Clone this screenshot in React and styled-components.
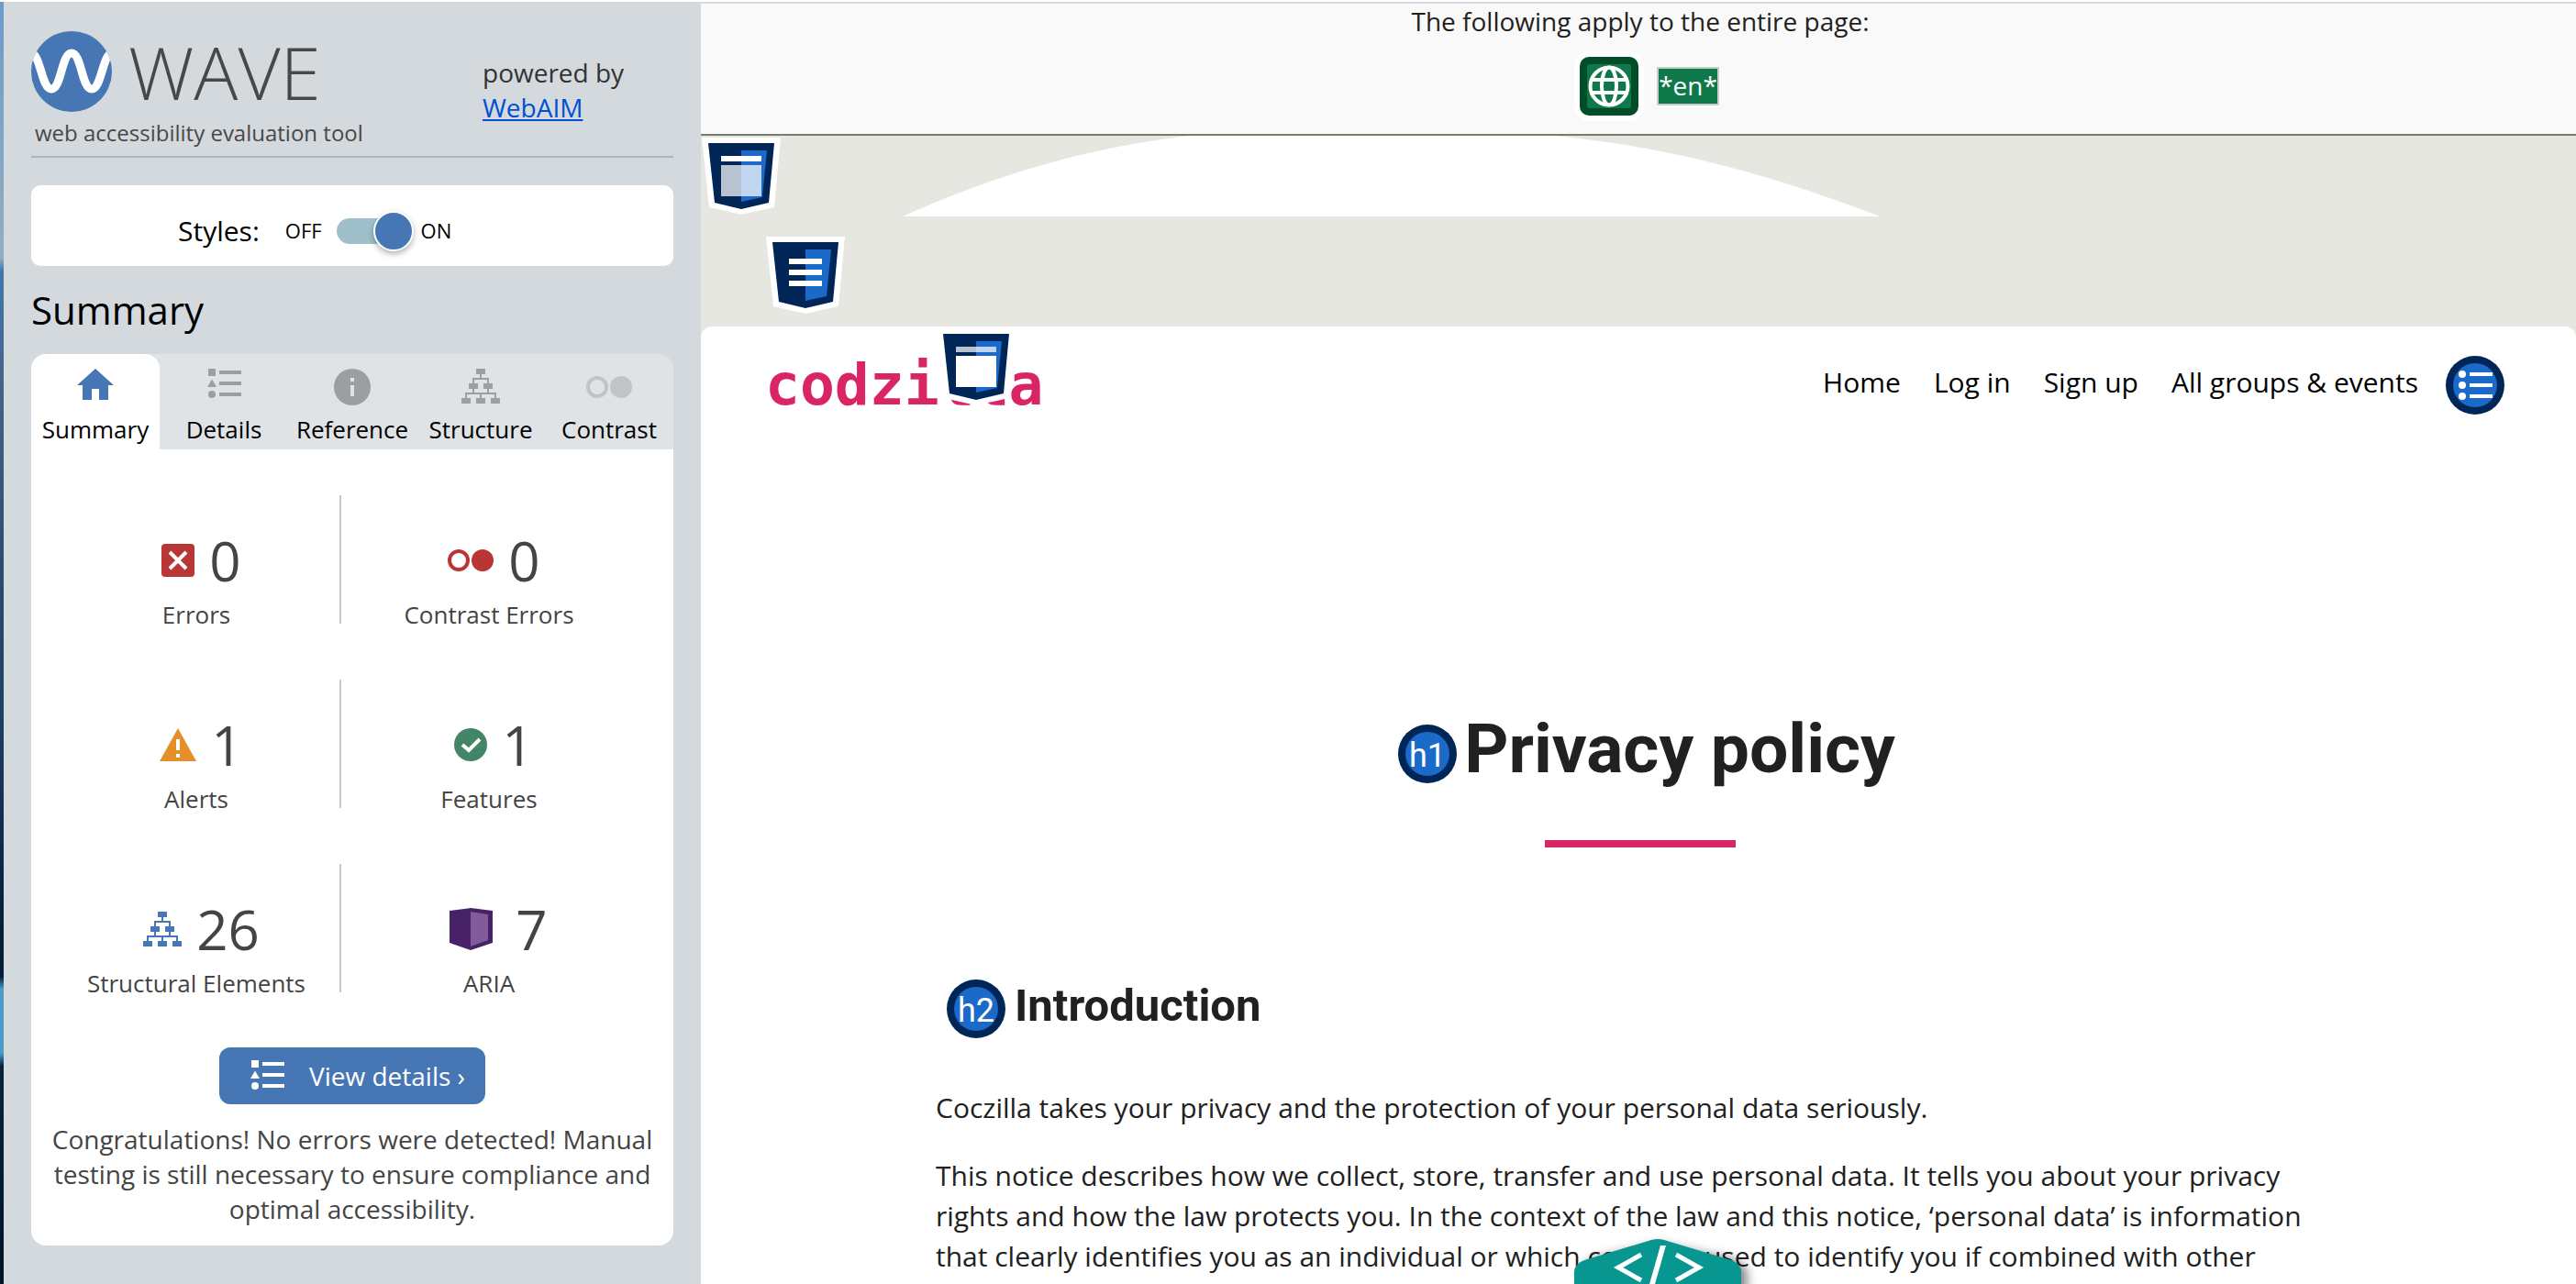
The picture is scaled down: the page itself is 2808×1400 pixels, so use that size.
import React, { useState } from "react";
import styled, { createGlobalStyle } from "styled-components";

const GlobalStyle = createGlobalStyle`
  *, *::before, *::after { box-sizing: border-box; }
  body {
    margin: 0;
    background: #fff;
    font-family: "Open Sans", "Noto Sans", sans-serif;
    font-size: 28px;
    color: #212121;
  }
  h1, h2, p, ul { margin: 0; padding: 0; font-weight: 400; }
  button, input { font-family: inherit; margin: 0; }
  svg { display: block; flex: none; }
`;

/* ---------- frame ---------- */

const Frame = styled.div`
  display: flex;
  height: 100vh;
  overflow: hidden;
  padding-top: 2px;
`;

const DesktopEdge = styled.div`
  flex: 0 0 4px;
  background: linear-gradient(
    #6c9cc8 0%, #93adc0 20%, #3e79ad 21%, #47668f 28%, #2b4a72 45%,
    #1f4068 55%, #06233f 70%, #001c36 76%, #4b9dc8 77%, #4b9dc8 82%,
    #0a2238 83%, #001526 100%
  );
`;

/* ---------- sidebar ---------- */

const Sidebar = styled.aside`
  flex: 0 0 760px;
  padding: 32px 30px 0;
  background: #d4d9dd;
`;

const SidebarHeader = styled.header`
  display: grid;
  grid-template-columns: 492px 1fr;
  padding-bottom: 8px;
  border-bottom: 2px solid #b0b6bb;
`;

const Brand = styled.div`
  display: flex;
  align-items: center;
  gap: 18px;
  font-size: 80px;
  font-weight: 300;
  line-height: 88px;
  color: #484848;
`;

const Tagline = styled.p`
  margin-top: 6px;
  padding-left: 4px;
  font-size: 24px;
  line-height: 34px;
  color: #484848;
`;

const PoweredBy = styled.p`
  padding-top: 26px;
  line-height: 38px;
  color: #333;
  a { display: block; width: fit-content; color: #0050d0; }
`;

const StylesCard = styled.div`
  display: flex;
  align-items: center;
  height: 88px;
  margin-top: 30px;
  padding: 10px 0 0 160px;
  border-radius: 10px;
  background: #fff;
  color: #000;
`;

const StylesLabel = styled.label`
  margin-right: 28px;
  font-size: 30px;
`;

const StateText = styled.span`
  font-size: 22px;
`;

const Switch = styled.input`
  appearance: none;
  display: flex;
  align-items: center;
  justify-content: ${(p) => (p.checked ? "flex-end" : "flex-start")};
  width: 84px;
  height: 28px;
  margin: 2px 8px 0 16px;
  border-radius: 14px;
  background: #9fc0cb;
  &::before {
    content: "";
    flex: none;
    width: 44px;
    height: 44px;
    border: 2px solid #fff;
    border-radius: 50%;
    background: #4676b3;
    box-shadow: 0 3px 6px rgba(0, 0, 0, 0.3);
  }
`;

const SectionTitle = styled.h2`
  margin: 20px 0;
  font-size: 42px;
  line-height: 56px;
  color: #000;
`;

const TabList = styled.div`
  display: grid;
  grid-template-columns: repeat(5, 1fr);
  border-radius: 16px 16px 0 0;
  background: #dfe3e6;
`;

const Tab = styled.button`
  display: flex;
  flex-direction: column;
  align-items: center;
  gap: 8px;
  height: 104px;
  padding: 16px 0 0;
  border: 0;
  border-radius: ${(p) => (p.$active ? "16px 16px 0 0" : "0")};
  background: ${(p) => (p.$active ? "#fff" : "transparent")};
  font-size: 26px;
  line-height: 36px;
  color: #000;
  svg { color: ${(p) => (p.$active ? "#4676b3" : "#9b9fa2")}; }
`;

const SummaryPanel = styled.div`
  padding: 50px 20px 21px;
  border-radius: 0 0 16px 16px;
  background: #fff;
  text-align: center;
  color: #444;
`;

const Counts = styled.div`
  display: grid;
  grid-template-columns: repeat(2, 314px);
  gap: 61px 4px;
  padding-left: 4px;
`;

const Count = styled.div`
  display: flex;
  flex-direction: column;
  justify-content: flex-end;
  gap: 19px;
  height: 140px;
  &:nth-child(odd) { border-right: 2px solid #c8c8c8; }
`;

const CountValue = styled.div`
  display: flex;
  align-items: center;
  justify-content: center;
  gap: 16px;
  padding-left: 11px;
  font-size: 60px;
  line-height: 60px;
`;

const CountName = styled.div`
  font-size: 26px;
  line-height: 20px;
`;

const DetailsButton = styled.button`
  display: flex;
  align-items: center;
  gap: 27px;
  height: 62px;
  margin: 60px auto 19px;
  padding: 0 22px 0 34px;
  border: 0;
  border-radius: 12px;
  background: #4676b3;
  font-size: 28px;
  line-height: 36px;
  color: #fff;
`;

const Message = styled.p`
  line-height: 38px;
`;

/* ---------- evaluated page ---------- */

const Page = styled.div`
  position: relative;
  flex: 1;
  display: flex;
  flex-direction: column;
  min-width: 0;
  border-top: 2px solid #d6dbe1;
  background: #e6e7e0;
`;

const PageNotice = styled.div`
  flex: none;
  padding: 0 0 14px 4px;
  border-bottom: 2px solid #717f6b;
  background: #f9f9f9;
  text-align: center;
  line-height: 38px;
  font-size: 28px;
`;

const NoticeIcons = styled.div`
  display: flex;
  align-items: center;
  justify-content: center;
  gap: 14px;
  margin-top: 14px;
  padding-left: 14px;
`;

const LangTag = styled.span`
  height: 42px;
  border: 2px solid #ccc;
  background: #0f784b;
  line-height: 36px;
  color: #fff;
`;

const Banner = styled.div`
  flex: none;
  height: 208px;
  padding-left: 220px;
`;

const BadgeSpot = styled.div`
  position: absolute;
  left: ${(p) => p.$left}px;
  top: ${(p) => p.$top}px;
`;

const Content = styled.div`
  flex: 1;
  border-radius: 12px 12px 0 0;
  background: #fff;
`;

const NavBar = styled.header`
  display: flex;
  align-items: center;
  justify-content: space-between;
  height: 128px;
  padding: 0 78px 0 70px;
`;

const Wordmark = styled.a`
  font-family: "DejaVu Sans Mono", monospace;
  font-size: 63px;
  font-weight: 700;
  line-height: 74px;
  color: #d92566;
  text-decoration: none;
`;

const Nav = styled.nav`
  display: flex;
  align-items: center;
  gap: 30px;
`;

const NavLinks = styled.ul`
  display: flex;
  gap: 36px;
  padding-bottom: 8px;
  list-style: none;
  font-size: 30px;
  a { color: #000; text-decoration: none; }
`;

const Article = styled.main`
  padding: 288px 252px 0 256px;
  font-size: 30px;
  line-height: 44px;
  p { margin-bottom: 30px; }
`;

const PageTitle = styled.h1`
  display: flex;
  align-items: center;
  justify-content: center;
  gap: 8px;
  padding-left: 14px;
  font: 700 75px/88px Roboto, sans-serif;
  svg { margin-top: 12px; }
`;

const Rule = styled.div`
  width: 208px;
  height: 8px;
  margin: 56px auto 144px;
  background: #d92566;
`;

const Heading = styled.h2`
  display: flex;
  gap: 10px;
  margin-bottom: 54px;
  padding-left: 12px;
  font: 700 49px/58px Roboto, sans-serif;
`;

const DevWidget = styled.button`
  position: absolute;
  bottom: 0;
  left: calc(50% - 82px);
  padding: 0;
  border: 0;
  background: none;
`;

/* ---------- drawings ---------- */

const WaveLogo = () => (
  <svg width="88" height="88" viewBox="0 0 88 88">
    <defs>
      <clipPath id="disc"><circle cx="44" cy="44" r="44" /></clipPath>
    </defs>
    <circle cx="44" cy="44" r="44" fill="#4676b3" />
    <path
      clipPath="url(#disc)"
      d="M-1 24C10 22 11 63 22 63S33 24 44 24S55 63 66 63S78 22 89 24"
      fill="none" stroke="#fff" strokeWidth="9"
    />
  </svg>
);

const HomeIcon = () => (
  <svg width="48" height="40" fill="currentColor">
    <path d="M24 0L44 18H38V34H28V22H20V34H10V18H4Z" />
  </svg>
);

const ListIcon = ({ width = 48, height = 40, x = 0 }) => (
  <svg width={width} height={height} viewBox={`${x} 0 ${width} ${height}`} fill="currentColor">
    <path d="M7 0h8v8H7zM19 2h24v4H19zM19 14h24v4H19zM19 26h24v4H19zM11 11.5L16 20H6z" />
    <circle cx="11" cy="28" r="4" />
  </svg>
);

const InfoIcon = () => (
  <svg width="48" height="40" fill="currentColor">
    <circle cx="24" cy="20" r="20" />
    <path d="M22 10h4v4h-4zM22 18h4v12h-4z" fill="#dfe3e6" />
  </svg>
);

const TreeIcon = ({ color = "currentColor", height = 40 }) => (
  <svg width="42" height={height} fill={color}>
    <path d="M16 0h10v6H16zM8 16h10v6H8zM24 16h10v6H24zM0 32h10v6H0zM16 32h10v6H16zM32 32h10v6H32z" />
    <path d="M21 6V11M13 16V11H29V16M13 22V27M29 22V27M5 32V27H37V32M21 27V32" fill="none" stroke={color} strokeWidth="2" />
  </svg>
);

const ContrastIcon = ({ color = "#c0c4c6" }) => (
  <svg width="50" height="40" fill={color}>
    <circle cx="12" cy="20" r="10" fill="none" stroke={color} strokeWidth="4" />
    <circle cx="38" cy="20" r="12" />
  </svg>
);

const ErrorIcon = () => (
  <svg width="36" height="36">
    <rect width="36" height="36" rx="4" fill="#ba3535" />
    <path d="M9 9L27 27M27 9L9 27" stroke="#fff" strokeWidth="4" />
  </svg>
);

const AlertIcon = () => (
  <svg width="40" height="36">
    <path d="M20 0L40 36H0Z" fill="#e48f27" />
    <path d="M18 12h4v12h-4zM18 28h4v4h-4z" fill="#fff" />
  </svg>
);

const FeatureIcon = () => (
  <svg width="36" height="36">
    <circle cx="18" cy="18" r="18" fill="#438567" />
    <path d="M9 18L16 24L28 12" fill="none" stroke="#fff" strokeWidth="4" />
  </svg>
);

const AriaIcon = () => (
  <svg width="66" height="48" viewBox="-10 0 66 48">
    <path d="M0 4L23 1L47 4V39L23 47L0 39Z" fill="#472266" />
    <path d="M23 5L42 8V36L23 43Z" fill="#805c9c" />
  </svg>
);

const GlobeIcon = () => (
  <svg width="76" height="76">
    <rect width="76" height="76" rx="16" fill="#fff" />
    <rect x="6" y="6" width="64" height="64" rx="10" fill="#004d28" />
    <rect x="14" y="14" width="48" height="48" rx="2" fill="#0f784b" />
    <g fill="none" stroke="#fff" strokeWidth="4">
      <circle cx="38" cy="38" r="20.5" />
      <ellipse cx="38" cy="38" rx="8" ry="20.5" />
      <path d="M18 31H58M18 45H58" />
    </g>
  </svg>
);

const ShieldBadge = ({ children }) => (
  <svg width="86" height="84">
    <path d="M0 0H86L79 76L43 84L8 76Z" fill="#fff" />
    <path d="M7 6H79L73 71L43 78L14 71Z" fill="#002657" />
    <path d="M43 14H71L66 65L43 70Z" fill="#1b6ac9" />
    {children}
  </svg>
);

const RoundBadge = ({ children }) => (
  <svg width="64" height="64">
    <circle cx="32" cy="32" r="32" fill="#002657" />
    <circle cx="32" cy="32" r="24" fill="#1b6ac9" />
    {children}
  </svg>
);

const LevelBadge = ({ level }) => (
  <RoundBadge>
    <text x="32" y="46" textAnchor="middle" fill="#fff" fontFamily="Roboto, sans-serif" fontWeight="400" fontSize="36">
      {level}
    </text>
  </RoundBadge>
);

const Mound = () => (
  <svg width="1065" height="88">
    <path d="M0 88C101 42 206 12 313 0H710C836 12 946 42 1065 88Z" fill="#fff" />
  </svg>
);

const CodeHexagon = () => (
  <svg width="224" height="60">
    <defs>
      <filter id="soft" x="-20%" y="-20%" width="150%" height="150%">
        <feGaussianBlur stdDeviation="6" />
      </filter>
    </defs>
    <path d="M22 80V50Q22 38 32 33L105 17L184 33Q200 38 200 50V80Z" fill="#000" opacity="0.5" filter="url(#soft)" />
    <path d="M12 60V47Q12 38 23 34L96 12Q103 10 110 12L183 34Q194 38 194 47V60Z" fill="#079790" />
    <path d="M85 28L60 42L85 56M123 28L148 42L123 56" fill="none" stroke="#fff" strokeWidth="5" />
    <path d="M106 18H112L100 60H94Z" fill="#fff" />
  </svg>
);

/* ---------- data ---------- */

const tabs = [
  ["Summary", HomeIcon],
  ["Details", ListIcon],
  ["Reference", InfoIcon],
  ["Structure", TreeIcon],
  ["Contrast", ContrastIcon],
];

const counts = [
  ["Errors", 0, <ErrorIcon />],
  ["Contrast Errors", 0, <ContrastIcon color="#ba3535" />],
  ["Alerts", 1, <AlertIcon />],
  ["Features", 1, <FeatureIcon />],
  ["Structural Elements", 26, <TreeIcon color="#4676b3" height={38} />],
  ["ARIA", 7, <AriaIcon />],
];

const links = ["Home", "Log in", "Sign up", "All groups & events"];

export default function App() {
  const [stylesOn, setStylesOn] = useState(true);
  const [active, setActive] = useState("Summary");

  return (
    <>
      <GlobalStyle />
      <Frame>
        <DesktopEdge />
        <Sidebar>
          <SidebarHeader>
            <div>
              <Brand><WaveLogo />WAVE</Brand>
              <Tagline>web accessibility evaluation tool</Tagline>
            </div>
            <PoweredBy>powered by <a href="#webaim">WebAIM</a></PoweredBy>
          </SidebarHeader>

          <StylesCard>
            <StylesLabel htmlFor="styles">Styles:</StylesLabel>
            <StateText>OFF</StateText>
            <Switch id="styles" type="checkbox" checked={stylesOn} onChange={(e) => setStylesOn(e.target.checked)} />
            <StateText>ON</StateText>
          </StylesCard>

          <SectionTitle>Summary</SectionTitle>

          <TabList role="tablist">
            {tabs.map(([name, Icon]) => (
              <Tab key={name} role="tab" aria-selected={active === name} $active={active === name} onClick={() => setActive(name)}>
                <Icon />
                {name}
              </Tab>
            ))}
          </TabList>

          <SummaryPanel>
            <Counts>
              {counts.map(([name, value, icon]) => (
                <Count key={name}>
                  <CountValue>{icon}{value}</CountValue>
                  <CountName>{name}</CountName>
                </Count>
              ))}
            </Counts>
            <DetailsButton><ListIcon width={37} height={34} x={6} />View details ›</DetailsButton>
            <Message>
              Congratulations! No errors were detected! Manual testing is still
              necessary to ensure compliance and optimal accessibility.
            </Message>
          </SummaryPanel>
        </Sidebar>

        <Page>
          <PageNotice>
            <p>The following apply to the entire page:</p>
            <NoticeIcons><GlobeIcon /><LangTag>*en*</LangTag></NoticeIcons>
          </PageNotice>
          <Banner><Mound /></Banner>

          <Content>
            <NavBar>
              <Wordmark href="#home">codzilla</Wordmark>
              <Nav>
                <NavLinks>
                  {links.map((name) => <li key={name}><a href="#page">{name}</a></li>)}
                </NavLinks>
                <RoundBadge>
                  <g fill="#fff">
                    <circle cx="18" cy="20" r="4" />
                    <circle cx="18" cy="32" r="4" />
                    <circle cx="18" cy="44" r="4" />
                    <path d="M26 18h25v4H26zM26 30h25v4H26zM26 42h25v4H26z" />
                  </g>
                </RoundBadge>
              </Nav>
            </NavBar>

            <Article>
              <PageTitle><LevelBadge level="h1" />Privacy policy</PageTitle>
              <Rule />
              <Heading><LevelBadge level="h2" />Introduction</Heading>
              <p>Coczilla takes your privacy and the protection of your personal data seriously.</p>
              <p>
                This notice describes how we collect, store, transfer and use personal data. It tells
                you about your privacy rights and how the law protects you. In the context of the law
                and this notice, ‘personal data’ is information that clearly identifies you as an
                individual or which could be used to identify you if combined with other
              </p>
            </Article>
          </Content>

          <BadgeSpot $left={1} $top={146}>
            <ShieldBadge>
              <path d="M21 20h44v6H21z" fill="#fff" />
              <path d="M21 30h44v34H21z" fill="#fff" opacity="0.72" />
            </ShieldBadge>
          </BadgeSpot>
          <BadgeSpot $left={71} $top={254}>
            <ShieldBadge>
              <path d="M25 24h36v6H25zM25 36h36v6H25zM25 48h36v6H25z" fill="#fff" />
            </ShieldBadge>
          </BadgeSpot>
          <BadgeSpot $left={257} $top={354}>
            <ShieldBadge>
              <path d="M21 20h44v6H21z" fill="#fff" opacity="0.72" />
              <path d="M21 30h44v34H21z" fill="#fff" />
            </ShieldBadge>
          </BadgeSpot>
          <DevWidget aria-label="Open developer tools"><CodeHexagon /></DevWidget>
        </Page>
      </Frame>
    </>
  );
}
